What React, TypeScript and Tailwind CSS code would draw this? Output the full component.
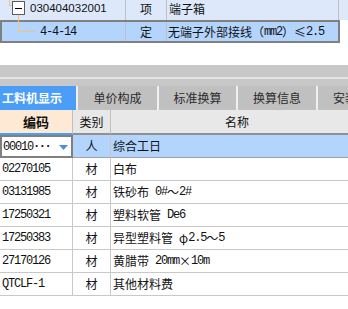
import React from "react";

function Mixed({ text }: { text: string }) {
  const parts = text.match(/[\x20-\x7e]+|[^\x20-\x7e]+/g) || [];
  return (
    <>
      {parts.map((p, i) =>
        /^[\x20-\x7e]+$/.test(p) ? (
          <span key={i} className="font-['Liberation_Mono',monospace] tracking-[-1.2px] whitespace-pre">
            {p}
          </span>
        ) : (
          <span key={i} className="font-['Noto_Sans_CJK_SC',sans-serif]">
            {p}
          </span>
        )
      )}
    </>
  );
}

const rows = [
  ["02270105", "材", "白布"],
  ["03131985", "材", "铁砂布 0#～2#"],
  ["17250321", "材", "塑料软管 De6"],
  ["17250383", "材", "异型塑料管 φ2.5～5"],
  ["27170126", "材", "黄腊带 20mm×10m"],
  ["QTCLF-1", "材", "其他材料费"],
];

export default function App() {
  return (
    <div className="relative w-[348px] h-[309px] overflow-hidden bg-white text-[12px] leading-none text-[#111] font-['Noto_Sans_CJK_SC',sans-serif]">
      {/* top table */}
      <div className="relative">
        <div className="flex h-[20px] bg-[#dde9fb]">
          <div className="w-[126px] shrink-0 border-r border-[#c0c0c0] pl-[30px] pt-[3px] font-['Liberation_Sans',sans-serif] text-[11.5px] leading-[11px]">
            030404032001
          </div>
          <div className="w-[41px] shrink-0 border-r border-[#c0c0c0] text-center pt-[2px] leading-[13px]">
            项
          </div>
          <div className="w-[172px] shrink-0 border-r border-[#c0c0c0] pl-[2px] pt-[2px] leading-[13px]">
            端子箱
          </div>
          <div className="flex-1" />
        </div>
        <div className="flex h-[23px] w-[340px] border-2 border-[#808080] bg-[#b3d5fd] items-center">
          <div className="w-[124px] shrink-0 h-full border-r border-[#c0c0c0] pl-[38px] flex items-center">
            <Mixed text="4-4-14" />
          </div>
          <div className="w-[41px] shrink-0 h-full border-r border-[#c0c0c0] flex items-center justify-center">
            定
          </div>
          <div className="flex-1 h-full pl-[1px] flex items-center whitespace-nowrap overflow-hidden">
            <Mixed text="无端子外部接线（mm2）≤2.5" />
          </div>
        </div>
        <svg className="absolute left-0 top-0" width="40" height="43" viewBox="0 0 40 43">
          <path d="M9.5 0 V5.5 H12" fill="none" stroke="#f5c27a" strokeWidth="1" />
          <path d="M18.5 15 V31.5 H35" fill="none" stroke="#f5c27a" strokeWidth="1" />
          <rect x="12.5" y="1.5" width="12" height="13" fill="#fff" stroke="#5a5a5a" strokeWidth="1" />
          <path d="M15 8.5 H22" stroke="#000" strokeWidth="1" />
        </svg>
      </div>

      <div className="h-[22px]" />

      {/* gray bar */}
      <div className="h-[21px] bg-[#c8c8c8] flex flex-col">
        <div className="h-[12px]" />
        <div className="h-[2px] bg-[#e4e4e4]" />
      </div>

      {/* tabs */}
      <div className="flex h-[24px] gap-[2px] bg-[#f0f0f0] whitespace-nowrap">
        <div className="w-[76px] shrink-0 bg-[#4a9ef8] text-white font-semibold pl-[2px] flex items-center">
          工料机显示
        </div>
        <div className="w-[79px] shrink-0 bg-[#c0c0c0] text-[#2a2a2a] flex items-center justify-center">
          单价构成
        </div>
        <div className="w-[77px] shrink-0 bg-[#c0c0c0] text-[#2a2a2a] flex items-center justify-center">
          标准换算
        </div>
        <div className="w-[78px] shrink-0 bg-[#c0c0c0] text-[#2a2a2a] flex items-center justify-center">
          换算信息
        </div>
        <div className="flex-1 bg-[#c0c0c0] text-[#2a2a2a] pl-[15px] flex items-center overflow-hidden">
          安装
        </div>
      </div>

      {/* header */}
      <div className="flex h-[25px]">
        <div className="w-[73px] shrink-0 bg-[#fde9d4] border-r border-[#c0c0c0] border-b-2 border-b-[#4a9ef8] flex items-center justify-center font-bold text-[13px]">
          编码
        </div>
        <div className="w-[38px] shrink-0 bg-[#e8e8e8] border-r border-[#c0c0c0] border-b-2 border-b-[#909090] flex items-center justify-center">
          类别
        </div>
        <div className="w-[252px] shrink-0 bg-[#e8e8e8] border-b-2 border-b-[#909090] flex items-center justify-center">
          名称
        </div>
      </div>

      {/* selected row */}
      <div className="flex h-[23px]">
        <div className="w-[73px] shrink-0 border-2 border-[#808080] bg-white flex items-center pl-[1px] relative">
          <Mixed text="00010" />
          <span className="font-['Liberation_Mono',monospace] tracking-[-1.5px] text-[12px] font-bold">···</span>
          <svg className="absolute left-[57px] top-[8px]" width="9" height="5" viewBox="0 0 9 5">
            <path d="M0 0 H9 L4.5 5 Z" fill="#4a8fd8" />
          </svg>
        </div>
        <div className="w-[38px] shrink-0 bg-[#b3d5fd] border-r border-[#c8c8c8] border-b border-b-[#a0a0a0] flex items-center justify-center">
          人
        </div>
        <div className="flex-1 bg-[#b3d5fd] border-b border-b-[#a0a0a0] flex items-center pl-[2px]">
          综合工日
        </div>
      </div>

      {rows.map((r, i) => (
        <div key={i} className="flex h-[23px] border-b border-[#c8c8c8]">
          <div className="w-[73px] shrink-0 border-r border-[#c8c8c8] flex items-center pl-[2px]">
            <Mixed text={r[0]} />
          </div>
          <div className="w-[38px] shrink-0 border-r border-[#c8c8c8] flex items-center justify-center">
            {r[1]}
          </div>
          <div className="flex-1 flex items-center pl-[2px] whitespace-nowrap">
            <Mixed text={r[2]} />
          </div>
        </div>
      ))}
    </div>
  );
}
